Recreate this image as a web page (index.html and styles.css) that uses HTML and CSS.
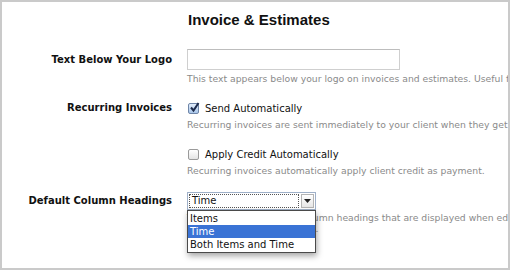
FILE: index.html
```html
<!DOCTYPE html>
<html lang="en">
<head>
    <meta charset="UTF-8">
    <title>Invoice &amp; Estimates</title>
    <link rel="stylesheet" href="styles.css">
</head>
<body>
    <div class="page">
        <h2 class="heading">Invoice &amp; Estimates</h2>

        <!-- text below logo -->
        <div class="row rowLogo">
            <label class="label">Text Below Your Logo</label>
            <div class="field">
                <div class="textInput"></div>
                <p class="help helpFirst">This text appears below your logo on invoices and estimates. Useful for</p>
            </div>
        </div>

        <!-- recurring invoices -->
        <div class="row rowRecurring">
            <label class="label">Recurring Invoices</label>
            <div class="field">
                <div class="check">
                    <span class="box checked">
                        <svg width="11" height="11" viewBox="0 0 11 11"><path d="M2 5.5 L4.5 8.5 L9.5 1" fill="none" stroke="#1c2a4a" stroke-width="2"/></svg>
                    </span>
                    <span class="checkText">Send Automatically</span>
                </div>
                <p class="help">Recurring invoices are sent immediately to your client when they get created</p>
            </div>
        </div>

        <div class="row rowCredit">
            <span class="label"></span>
            <div class="field">
                <div class="check">
                    <span class="box"></span>
                    <span class="checkText">Apply Credit Automatically</span>
                </div>
                <p class="help">Recurring invoices automatically apply client credit as payment.</p>
            </div>
        </div>

        <!-- column headings -->
        <div class="row rowColumns">
            <label class="label">Default Column Headings</label>
            <div class="field">
                <div class="select">
                    <span class="selectValue">Time</span>
                    <span class="selectArrow">
                        <svg width="7" height="4" viewBox="0 0 7 4"><path d="M0 0 H7 L3.5 4 Z" fill="#222"/></svg>
                    </span>
                </div>
                <p class="help helpColumns">These are the preferred column headings that are displayed when editing<br>new invoices and estimates.</p>
                <ul class="options">
                    <li>Items</li>
                    <li class="active">Time</li>
                    <li>Both Items and Time</li>
                </ul>
            </div>
        </div>
    </div>
</body>
</html>
```

FILE: styles.css
```css
body {
    margin: 0;
    background: #ffffff;
}

.page {
    width: 510px;
    height: 270px;
    box-sizing: border-box;
    border: 2px solid #cacaca;
    padding-top: 8px;
    overflow: hidden;
    font-family: "DejaVu Sans", Verdana, sans-serif;
}

.heading {
    margin: 0 0 20px 186px;
    font-family: "Liberation Sans", Arial, sans-serif;
    font-size: 15px;
    line-height: 19px;
    font-weight: bold;
    color: #111111;
}

.row {
    display: grid;
    grid-template-columns: 170px 1fr;
    column-gap: 15px;
    align-items: start;
}

.label {
    text-align: right;
    font-size: 10px;
    font-weight: bold;
    color: #111111;
    white-space: nowrap;
}

.field {
    position: relative;
    min-width: 0;
}

.help {
    margin: 3px 0 0 0;
    font-size: 9.25px;
    line-height: 12px;
    color: #8a8a8a;
    white-space: nowrap;
}

.rowLogo .label {
    line-height: 21px;
}

.textInput {
    width: 211px;
    height: 19px;
    border: 1px solid #cfcfcf;
    border-top-color: #bdbdbd;
}

.rowRecurring {
    margin-top: 16px;
}

.rowCredit {
    margin-top: 16px;
}

.rowRecurring .label {
    line-height: 14px;
}

.check {
    display: flex;
    align-items: center;
    gap: 6px;
    height: 14px;
    font-size: 10px;
    color: #111111;
}

.rowRecurring .help,
.rowCredit .help {
    margin-top: 4px;
}

.box {
    width: 9px;
    height: 9px;
    margin-left: 1px;
    border: 1px solid #9a9a9a;
    border-radius: 2px;
    background: linear-gradient(#ffffff, #e4e4e4);
    position: relative;
}

.box.checked {
    border-color: #6f86a8;
    background: linear-gradient(#e3eefb, #a9c6ea);
}

.box svg {
    position: absolute;
    left: 0;
    top: -2px;
}

.rowColumns {
    margin-top: 15px;
}

.rowColumns .label {
    line-height: 18px;
}

.select {
    display: flex;
    width: 127px;
    height: 16px;
    border: 1px solid #9fb0c8;
    background: #ffffff;
}

.selectValue {
    flex: 1;
    margin: 1px 2px 1px 1px;
    padding-left: 2px;
    border: 1px dotted #555555;
    font-size: 10px;
    line-height: 12px;
    color: #111111;
}

.selectArrow {
    width: 13px;
    margin: 1px 1px 1px 0;
    border: 1px solid #b4b4b4;
    box-sizing: border-box;
    display: flex;
    align-items: center;
    justify-content: center;
    background: linear-gradient(#ffffff, #e6e6e6);
}

.helpColumns {
    margin-top: 2px;
    line-height: 11px;
}

.options {
    position: absolute;
    left: 0;
    top: 18px;
    width: 127px;
    margin: 0;
    padding: 1px 0;
    list-style: none;
    background: #ffffff;
    border: 1px solid #4a4a4a;
    box-shadow: 1px 3px 6px rgba(0, 0, 0, 0.35);
    font-size: 10px;
    color: #111111;
}

.options li {
    height: 13px;
    line-height: 13px;
    padding-left: 2px;
}

.options li.active {
    background: #3a73d5;
    color: #ffffff;
}
```
